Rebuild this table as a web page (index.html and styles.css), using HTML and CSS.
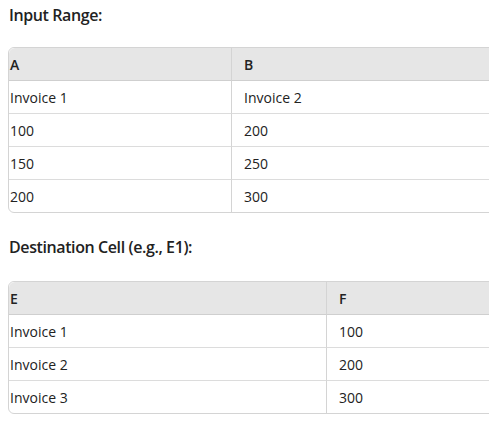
FILE: index.html
```html
<!DOCTYPE html>
<html>
<head>
<meta charset="utf-8">
<link rel="stylesheet" href="styles.css">
</head>
<body>
<div class="page">
  <h3 class="label first">Input Range:</h3>
  <table class="grid grid-a">
    <thead><tr><th class="c1">A</th><th>B</th></tr></thead>
    <tbody>
      <tr><td class="c1">Invoice 1</td><td>Invoice 2</td></tr>
      <tr><td class="c1">100</td><td>200</td></tr>
      <tr><td class="c1">150</td><td>250</td></tr>
      <tr><td class="c1">200</td><td>300</td></tr>
    </tbody>
  </table>
  <h3 class="label second">Destination Cell (e.g., E1):</h3>
  <table class="grid grid-b">
    <thead><tr><th class="c1">E</th><th>F</th></tr></thead>
    <tbody>
      <tr><td class="c1">Invoice 1</td><td>100</td></tr>
      <tr><td class="c1">Invoice 2</td><td>200</td></tr>
      <tr><td class="c1">Invoice 3</td><td>300</td></tr>
    </tbody>
  </table>
</div>
</body>
</html>
```
FILE: styles.css
```css
html, body { margin: 0; padding: 0; overflow: hidden; background: #fff; }
body { font-family: "Open Sans", "Noto Sans", sans-serif; color: #222; }
.page { padding-left: 8px; width: 900px; }
.label { font-size: 16px; letter-spacing: -0.4px; font-weight: 600; line-height: 22px; margin: 0; color: #222; padding-left: 1px; }
.label.first { padding-top: 4px; margin-bottom: 21px; }
.label.second { margin-top: 23px; margin-bottom: 23px; }
.grid { border-collapse: separate; border-spacing: 0; border: 1px solid #d4d4d4; border-radius: 6px; font-size: 14px; }
.grid th, .grid td { height: 33px; padding: 0 12px; text-align: left; box-sizing: border-box; border-bottom: 1px solid #dcdcdc; }
.grid tbody tr:last-child td { border-bottom: none; height: 32px; }
.grid th { background: #e6e6e6; font-weight: 600; border-bottom: 1px solid #cfcfcf; }
.grid th:first-child { border-top-left-radius: 6px; }
.grid .c1 { padding-left: 1px; border-right: 1px solid #d4d4d4; }
.grid-a .c1 { width: 223px; }
.grid-a th + th, .grid-a td + td { width: 300px; }
.grid-b .c1 { width: 318px; }
.grid-b th + th, .grid-b td + td { width: 300px; }
```
